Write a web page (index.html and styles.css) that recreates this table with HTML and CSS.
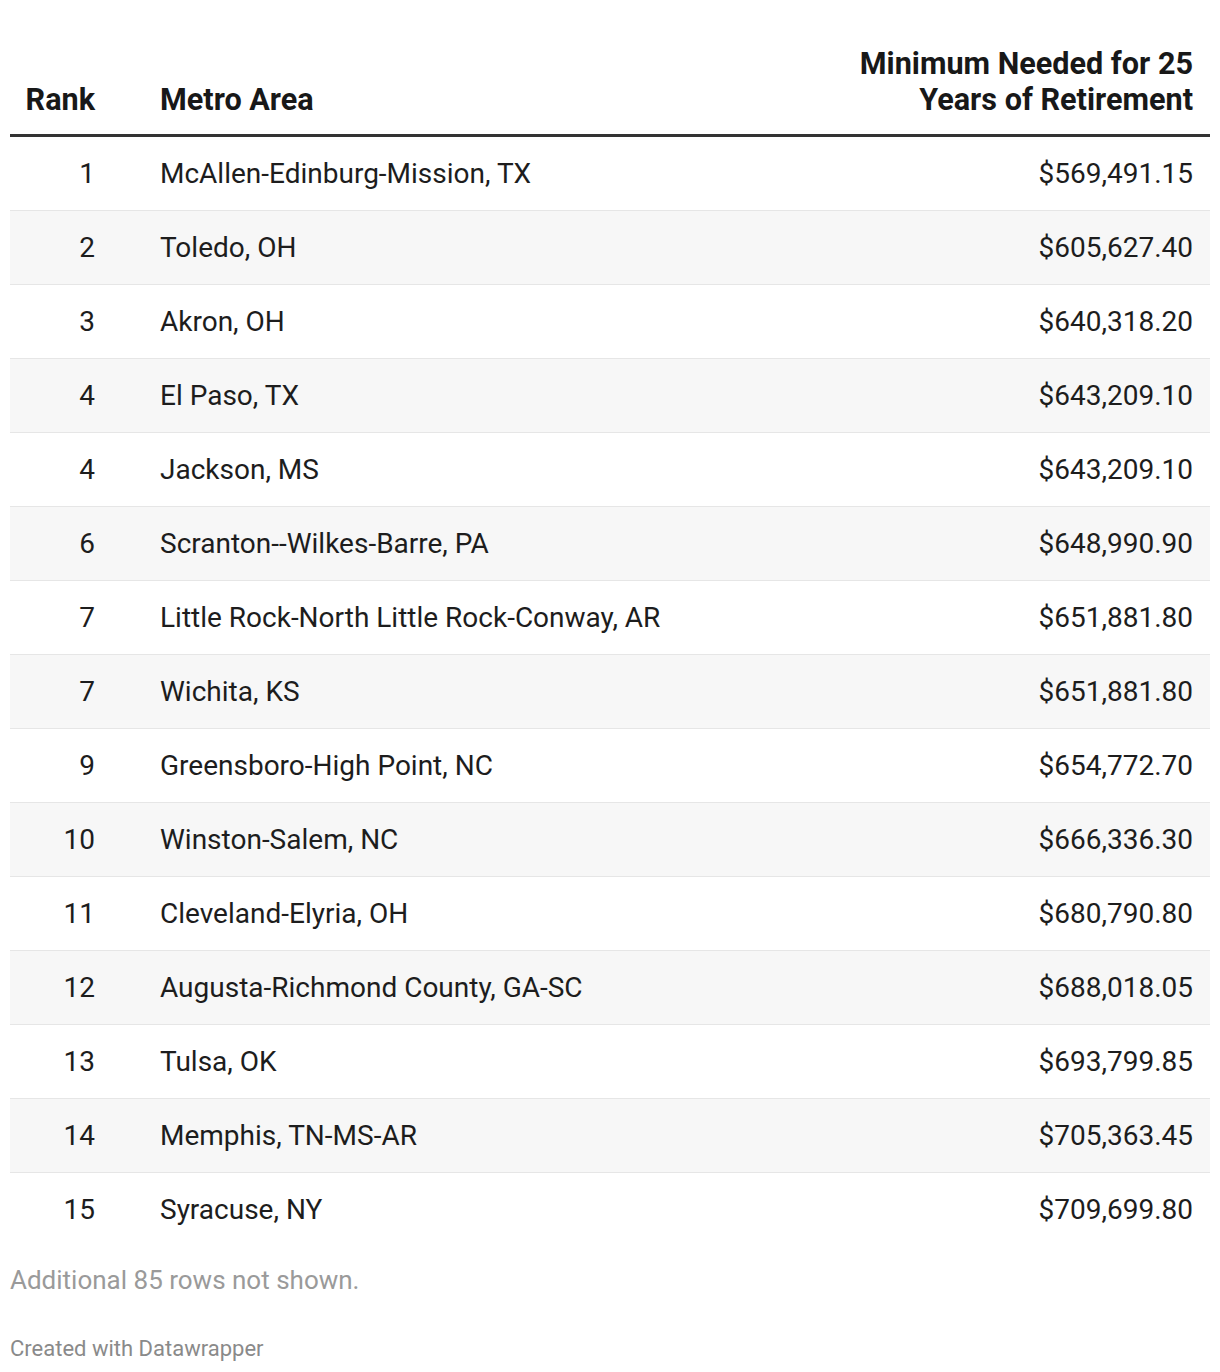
FILE: index.html
```html
<!DOCTYPE html>
<html>
<head>
<meta charset="utf-8">
<link rel="stylesheet" href="styles.css">
</head>
<body>
<div class="chart">
  <table class="dw-table">
    <thead>
      <tr>
        <th class="c-rank">Rank</th>
        <th class="c-metro">Metro Area</th>
        <th class="c-val">Minimum Needed for 25<br>Years of Retirement</th>
      </tr>
    </thead>
    <tbody>
      <tr><td class="c-rank">1</td><td class="c-metro">McAllen-Edinburg-Mission, TX</td><td class="c-val">$569,491.15</td></tr>
      <tr><td class="c-rank">2</td><td class="c-metro">Toledo, OH</td><td class="c-val">$605,627.40</td></tr>
      <tr><td class="c-rank">3</td><td class="c-metro">Akron, OH</td><td class="c-val">$640,318.20</td></tr>
      <tr><td class="c-rank">4</td><td class="c-metro">El Paso, TX</td><td class="c-val">$643,209.10</td></tr>
      <tr><td class="c-rank">4</td><td class="c-metro">Jackson, MS</td><td class="c-val">$643,209.10</td></tr>
      <tr><td class="c-rank">6</td><td class="c-metro">Scranton--Wilkes-Barre, PA</td><td class="c-val">$648,990.90</td></tr>
      <tr><td class="c-rank">7</td><td class="c-metro">Little Rock-North Little Rock-Conway, AR</td><td class="c-val">$651,881.80</td></tr>
      <tr><td class="c-rank">7</td><td class="c-metro">Wichita, KS</td><td class="c-val">$651,881.80</td></tr>
      <tr><td class="c-rank">9</td><td class="c-metro">Greensboro-High Point, NC</td><td class="c-val">$654,772.70</td></tr>
      <tr><td class="c-rank">10</td><td class="c-metro">Winston-Salem, NC</td><td class="c-val">$666,336.30</td></tr>
      <tr><td class="c-rank">11</td><td class="c-metro">Cleveland-Elyria, OH</td><td class="c-val">$680,790.80</td></tr>
      <tr><td class="c-rank">12</td><td class="c-metro">Augusta-Richmond County, GA-SC</td><td class="c-val">$688,018.05</td></tr>
      <tr><td class="c-rank">13</td><td class="c-metro">Tulsa, OK</td><td class="c-val">$693,799.85</td></tr>
      <tr><td class="c-rank">14</td><td class="c-metro">Memphis, TN-MS-AR</td><td class="c-val">$705,363.45</td></tr>
      <tr><td class="c-rank">15</td><td class="c-metro">Syracuse, NY</td><td class="c-val">$709,699.80</td></tr>
    </tbody>
  </table>
  <p class="notes">Additional 85 rows not shown.</p>
  <p class="credit">Created with Datawrapper</p>
</div>
</body>
</html>
```
FILE: styles.css
```css
html, body {
  margin: 0;
  padding: 0;
  background: #ffffff;
}
body {
  font-family: Roboto, "Liberation Sans", sans-serif;
  color: #1d1d1d;
}
.chart {
  padding: 46px 10px 0 10px;
}
.dw-table {
  width: 1200px;
  border-collapse: collapse;
  font-size: 28px;
}
.dw-table th {
  font-size: 30.6px;
  font-weight: 700;
  line-height: 36px;
  vertical-align: bottom;
  padding: 0 0 16px 0;
  border-bottom: 3px solid #333333;
  color: #181818;
}
.dw-table td {
  height: 72px;
  padding: 1px 0 0 0;
  line-height: 30px;
  vertical-align: middle;
  border-bottom: 1px solid #e6e6e6;
}
.dw-table tbody tr:last-child td {
  border-bottom: none;
}
.dw-table tbody tr:nth-child(even) td {
  background: #f7f7f7;
}
.c-rank {
  width: 85px;
  text-align: right;
}
.c-metro {
  text-align: left;
  padding-left: 65px !important;
}
.c-val {
  text-align: right;
  padding-right: 17px !important;
}
.notes {
  margin: 18px 0 0 0;
  font-size: 26px;
  line-height: 32px;
  color: #9a9a9a;
}
.credit {
  margin: 39px 0 0 0;
  font-size: 22px;
  line-height: 28px;
  color: #8a8a8a;
}
```
